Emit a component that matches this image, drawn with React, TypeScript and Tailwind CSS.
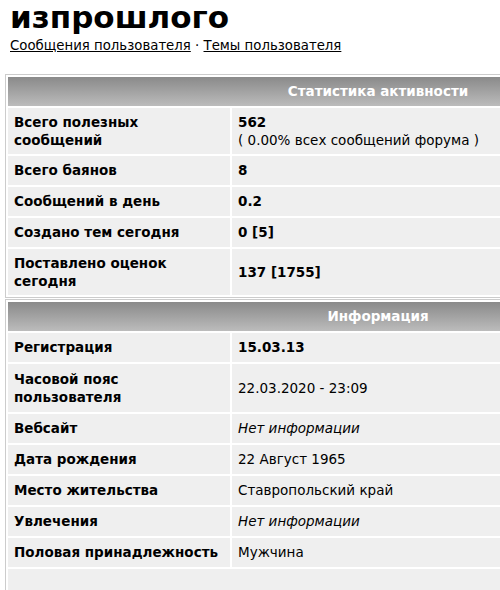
import React from 'react'

type Row = { label: React.ReactNode; value: React.ReactNode; tall?: boolean; tight?: boolean }

const stats: Row[] = [
  {
    label: (
      <>
        Всего полезных
        <br />
        сообщений
      </>
    ),
    value: (
      <>
        <b>562</b>
        <br />
        ( 0.00% всех сообщений форума )
      </>
    ),
    tall: true,
    tight: true,
  },
  { label: 'Всего баянов', value: <b>8</b> },
  { label: 'Сообщений в день', value: <b>0.2</b> },
  { label: 'Создано тем сегодня', value: <b>0 [5]</b> },
  {
    label: (
      <>
        Поставлено оценок
        <br />
        сегодня
      </>
    ),
    value: <b>137 [1755]</b>,
    tall: true,
    tight: true,
  },
]

const info: Row[] = [
  { label: 'Регистрация', value: <b>15.03.13</b> },
  {
    label: (
      <>
        Часовой пояс
        <br />
        пользователя
      </>
    ),
    value: '22.03.2020 - 23:09',
    tall: true,
  },
  { label: 'Вебсайт', value: <i>Нет информации</i> },
  { label: 'Дата рождения', value: '22 Август 1965' },
  { label: 'Место жительства', value: 'Ставропольский край' },
  { label: 'Увлечения', value: <i>Нет информации</i> },
  { label: 'Половая принадлежность', value: 'Мужчина' },
]

function Section({ title, rows, tail }: { title: string; rows: Row[]; tail?: boolean }) {
  return (
    <table className="w-[746px] table-fixed border border-[#cccccc] border-separate border-spacing-[2px] text-[13.5px] text-black">
      <colgroup>
        <col className="w-[222px]" />
        <col />
      </colgroup>
      <thead>
        <tr>
          <th
            colSpan={2}
            className="h-[29px] bg-gradient-to-b from-[#8a8a8a] to-[#bcbcbc] text-center font-bold text-white"
          >
            {title}
          </th>
        </tr>
      </thead>
      <tbody>
        {rows.map((r, i) => {
          const cell = `bg-[#efefef] px-[6px] align-middle whitespace-nowrap ${r.tight ? 'py-[5px]' : 'py-[6px]'}`
          return (
            <tr key={i} className={r.tall ? 'leading-[18px]' : 'leading-[17px]'}>
              <td className={`${cell} font-bold`}>{r.label}</td>
              <td className={cell}>{r.value}</td>
            </tr>
          )
        })}
        {tail && (
          <tr>
            <td colSpan={2} className="h-[40px] bg-[#efefef]" />
          </tr>
        )}
      </tbody>
    </table>
  )
}

export default function App() {
  return (
    <div className="h-[590px] w-[500px] overflow-hidden bg-white px-[5px] pt-[1px] font-['DejaVu_Sans',Verdana,sans-serif] text-black">
      {/* Header */}
      <h1 className="pl-[5px] text-[31px] leading-[32px] font-bold">изпрошлого</h1>
      <div className="mt-1 pl-[5px] text-[13.3px] leading-[17px]">
        <a href="#" className="underline">
          Сообщения пользователя
        </a>{' '}
        ·{' '}
        <a href="#" className="underline">
          Темы пользователя
        </a>
      </div>

      {/* Tables */}
      <div className="mt-[20px]">
        <Section title="Статистика активности" rows={stats} />
        <div className="mt-[1px]">
          <Section title="Информация" rows={info} tail />
        </div>
      </div>
    </div>
  )
}
